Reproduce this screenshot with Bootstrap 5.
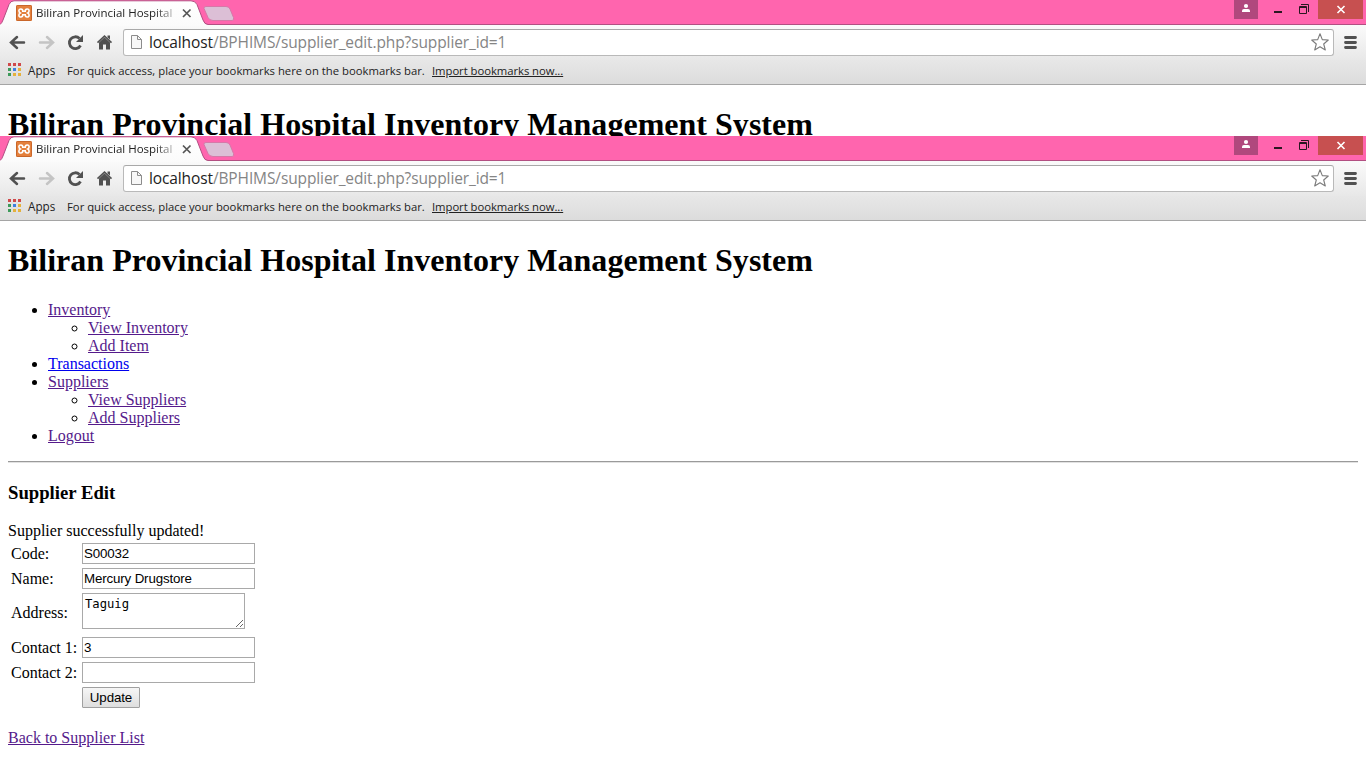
<!DOCTYPE html>
<html lang="en">
<head>
<meta charset="utf-8">
<meta name="viewport" content="width=device-width, initial-scale=1">
<title>Biliran Provincial Hospital Inventory Management System</title>
<link href="https://cdn.jsdelivr.net/npm/bootstrap@5.3.0/dist/css/bootstrap.min.css" rel="stylesheet">
<style>
body{font-family:"Liberation Serif",serif;font-size:16px;line-height:18px;color:#000;background:#fff;overflow:hidden}
.window{width:1366px;overflow:hidden}
.window-back{height:136px}
.window-front{height:634px}
.chrome-ui{font-family:"Open Sans","Noto Sans",sans-serif;font-size:12px;line-height:16px;color:#222}
.titlebar{height:24px;background:#ff65ae}
.tab-shape{left:0;top:0;z-index:1}
.tab-label{left:36px;top:5px;z-index:2;width:140px;font-size:11.5px;white-space:nowrap;overflow:hidden;-webkit-mask-image:linear-gradient(90deg,#000 118px,transparent 146px);mask-image:linear-gradient(90deg,#000 118px,transparent 146px)}
.toolbar{height:36px;background:linear-gradient(#fbfbfb,#e8e8e8);box-shadow:inset 0 1px #b24f82}
.bookmarks{height:25px;background:linear-gradient(#e7e7e7,#dcdcdc);border-bottom:1px solid #a5a5a5;padding:0 0 2px 8px}
.omnibox{margin-left:10px;width:1211px;height:27px;background:#fff;border:1px solid #b9b9b9;border-top-color:#a9a9a9;border-radius:3px;padding:0 3px 0 6px}
.address{margin-left:6px;font-size:15.5px;letter-spacing:-.115px;line-height:24px;color:#858585;white-space:pre}
.address b{font-weight:400;color:#222}
.bm-text{white-space:nowrap;font-size:11.3px}
.apps-label{margin-left:7px;width:39px;font-size:11.7px;margin-top:-2px}
.hint{width:365px}
.import{letter-spacing:-.05px}
.window svg{display:block;flex:none}
.viewport{padding:21px 8px 0}
.viewport h1{font-size:32px;line-height:37px;font-weight:700;letter-spacing:.02px;margin:0 0 22px}
.viewport h3{font-size:18.72px;line-height:21px;font-weight:700;margin:0 0 19px}
.viewport ul{padding-left:40px;margin:0}
.viewport a{color:#551a8b;text-decoration:underline}
.viewport a.fresh{color:#0000ee}
.rule{height:2px;border-top:1px solid #9a9a9a;border-bottom:1px solid #e2e2e2;margin:16px 0 19px}
.fields{border-collapse:separate;border-spacing:2px}
.fields td{padding:1px;vertical-align:middle}
.fields td:first-child{width:69px;white-space:nowrap}
.box{display:block;border:1px solid #a9a9a9;border-radius:0;background:#fff;color:#000;width:173px;height:21px;padding:1px;font:13.33px/17px "Liberation Sans",sans-serif;letter-spacing:-.15px}
textarea.box{width:163px;height:36px;padding:3px 2px 1px;margin-bottom:4px;font:12.2px/15px "DejaVu Sans Mono",monospace;letter-spacing:0;resize:both;overflow:auto}
.update{display:block;width:58px;height:21px;border:1px solid #a0a0a0;border-radius:1px;background:linear-gradient(#f6f6f6,#dedede);color:#000;padding:0;font:13.33px/19px "Liberation Sans",sans-serif;letter-spacing:-.1px}
.back-link{margin-top:18px}
</style>
</head>
<body>
<svg width="0" height="0" class="position-absolute">
  <defs>
    <linearGradient id="tabFill" x1="0" y1="0" x2="0" y2="1"><stop offset="0" stop-color="#fff"/><stop offset="1" stop-color="#fbfbfb"/></linearGradient>
    <symbol id="tabs" viewBox="0 0 240 26">
      <path d="M0 24.500Q2 23 3 20L9 4.500Q10.500 .8 14 .8H191Q195 .8 197 4.500L203 20Q204.500 24.500 208 24.500V26H0z" fill="url(#tabFill)"/>
      <path d="M0 24.500Q2 23 3 20L9 4.500Q10.500 .8 14 .8H191Q195 .8 197 4.500L203 20Q204.500 24.500 208 24.500H240" fill="none" stroke="#b24f82"/>
      <path d="M206 6.500H226Q229 6.500 230 9L233.500 17.500Q234.500 20.500 232 20.500H213Q209.500 20.500 208 17.500L204 8.500Q203.500 6.500 206 6.500z" fill="#dcbfd6" stroke="#d678a8"/>
      <rect x="16" y="5" width="16" height="16" rx="1.500" fill="#e4803c"/>
      <rect x="16.500" y="5.500" width="15" height="15" rx="1" fill="none" stroke="#c9662a"/>
      <path d="M24 11.200H22.800C22.800 8.300 18.900 8.300 18.900 10.800Q18.900 12.300 20.200 13Q18.900 13.700 18.900 15.200C18.900 17.700 22.800 17.700 22.800 14.800H25.200C25.200 17.700 29.100 17.700 29.100 15.200Q29.100 13.700 27.800 13Q29.100 12.300 29.100 10.800C29.100 8.300 25.200 8.300 25.200 11.200z" fill="none" stroke="#fff" stroke-width="1.600"/>
      <path d="M183 9.500L190.500 17M190.500 9.500L183 17" stroke="#555" stroke-width="1.700"/>
    </symbol>
    <symbol id="controls" viewBox="0 0 130 24">
      <rect width="24" height="19" fill="#b0487d"/>
      <circle cx="12" cy="6" r="2.100" fill="#fff"/><path d="M8 12V10.800Q8 9 10 9H14Q16 9 16 10.800V12z" fill="#fff"/>
      <path d="M40 11h8v2h-8z" fill="#2a1721"/>
      <path d="M65.500 6.500h7v7h-7zM65 7.500h8M67 4.500h7.500V12" fill="none" stroke="#2a1721"/>
      <rect x="84" width="45" height="19" fill="#c75050"/>
      <path d="M103.500 6L110.500 13M110.500 6L103.500 13" stroke="#fff" stroke-width="1.600"/>
    </symbol>
    <symbol id="navicons" viewBox="0 0 113 36">
      <path d="M17 13L11 18.500L17 24M11.500 18.500H24" fill="none" stroke="#515151" stroke-width="2.500" stroke-linecap="round"/>
      <path d="M47 13L53 18.500L47 24M52.500 18.500H40" fill="none" stroke="#c4c4c4" stroke-width="2.500" stroke-linecap="round"/>
      <path d="M80.500 21.500A5.900 5.900 0 1 1 79.500 14.500" fill="none" stroke="#515151" stroke-width="2.800"/>
      <path d="M83 11V18H76z" fill="#515151"/>
      <path d="M97.500 18.700L104.500 12L111.500 18.700" fill="none" stroke="#515151" stroke-width="1.600"/>
      <path d="M99 18.500L104.500 13.300L110 18.500V25.500H106V20.500H103V25.500H99zM107.500 11.500h2.500v4l-2.500-2z" fill="#515151"/>
    </symbol>
    <symbol id="page" viewBox="0 0 13 16">
      <path d="M1.500 1.500H7.500L11.500 5.500V14.500H1.500z" fill="#f7f7f7" stroke="#8c8c8c"/><path d="M7.500 1.500V5.500H11.500" fill="none" stroke="#8c8c8c"/>
    </symbol>
    <symbol id="star" viewBox="0 0 20 20">
      <path d="M10 1.800L12.300 7.600L18.300 8L13.700 12L15.300 18L10 14.700L4.700 18L6.300 12L1.700 8L7.700 7.600z" fill="#fff" stroke="#7b7b7b" stroke-width="1.100" stroke-linejoin="round"/>
    </symbol>
    <symbol id="menu" viewBox="0 0 13 13"><path d="M1.500 1.500H11.500M1.500 6.500H11.500M1.500 11.500H11.500" stroke="#515151" stroke-width="2.800" stroke-linecap="round"/></symbol>
    <symbol id="apps" viewBox="0 0 13 13">
      <path d="M0 0h3v3H0zM5 0h3v3H5zM10 0h3v3h-3z" fill="#d0494a"/>
      <path d="M0 5h3v3H0zM0 10h3v3H0z" fill="#3d9a5a"/><path d="M5 5h3v3H5z" fill="#3f7fe0"/>
      <path d="M5 10h3v3H5zM10 5h3v3h-3zM10 10h3v3h-3z" fill="#e5b13c"/>
    </symbol>
  </defs>
</svg>

<section class="window window-back">
  <header class="chrome-ui">
    <div class="titlebar position-relative d-flex justify-content-end">
      <svg class="tab-shape position-absolute" width="240" height="26"><use href="#tabs"/></svg>
      <span class="tab-label position-absolute">Biliran Provincial Hospital I</span>
      <svg width="132" height="24" viewBox="0 0 132 24"><use href="#controls" width="130" height="24"/></svg>
    </div>
    <div class="toolbar d-flex align-items-center">
      <svg width="113" height="36"><use href="#navicons"/></svg>
      <div class="omnibox d-flex align-items-center">
        <svg width="13" height="16"><use href="#page"/></svg>
        <span class="address"><b>localhost</b>/BPHIMS/supplier_edit.php?supplier_id=1</span>
        <svg class="ms-auto" width="20" height="20"><use href="#star"/></svg>
      </div>
      <svg class="ms-auto me-2" width="14" height="13" viewBox="0 0 14 13"><use href="#menu" width="13" height="13"/></svg>
    </div>
    <div class="bookmarks d-flex align-items-center">
      <svg class="mb-1" width="13" height="13"><use href="#apps"/></svg>
      <span class="bm-text apps-label">Apps</span>
      <span class="bm-text hint">For quick access, place your bookmarks here on the bookmarks bar.</span>
      <u class="bm-text import">Import bookmarks now...</u>
    </div>
  </header>
  <main class="viewport"><h1>Biliran Provincial Hospital Inventory Management System</h1></main>
</section>

<section class="window window-front">
  <header class="chrome-ui">
    <div class="titlebar position-relative d-flex justify-content-end">
      <svg class="tab-shape position-absolute" width="240" height="26"><use href="#tabs"/></svg>
      <span class="tab-label position-absolute">Biliran Provincial Hospital I</span>
      <svg width="132" height="24" viewBox="0 0 132 24"><use href="#controls" width="130" height="24"/></svg>
    </div>
    <div class="toolbar d-flex align-items-center">
      <svg width="113" height="36"><use href="#navicons"/></svg>
      <div class="omnibox d-flex align-items-center">
        <svg width="13" height="16"><use href="#page"/></svg>
        <span class="address"><b>localhost</b>/BPHIMS/supplier_edit.php?supplier_id=1</span>
        <svg class="ms-auto" width="20" height="20"><use href="#star"/></svg>
      </div>
      <svg class="ms-auto me-2" width="14" height="13" viewBox="0 0 14 13"><use href="#menu" width="13" height="13"/></svg>
    </div>
    <div class="bookmarks d-flex align-items-center">
      <svg class="mb-1" width="13" height="13"><use href="#apps"/></svg>
      <span class="bm-text apps-label">Apps</span>
      <span class="bm-text hint">For quick access, place your bookmarks here on the bookmarks bar.</span>
      <u class="bm-text import">Import bookmarks now...</u>
    </div>
  </header>
  <main class="viewport">
    <h1>Biliran Provincial Hospital Inventory Management System</h1>
    <ul>
      <li><a href="#">Inventory</a>
        <ul><li><a href="#">View Inventory</a></li><li><a href="#">Add Item</a></li></ul>
      </li>
      <li><a href="#" class="fresh">Transactions</a></li>
      <li><a href="#">Suppliers</a>
        <ul><li><a href="#">View Suppliers</a></li><li><a href="#">Add Suppliers</a></li></ul>
      </li>
      <li><a href="#">Logout</a></li>
    </ul>
    <div class="rule"></div>
    <h3>Supplier Edit</h3>
    <div>Supplier successfully updated!</div>
    <form>
      <table class="fields">
        <tr><td>Code:</td><td><input class="box" value="S00032"></td></tr>
        <tr><td>Name:</td><td><input class="box" value="Mercury Drugstore"></td></tr>
        <tr><td>Address:</td><td><textarea class="box" spellcheck="false">Taguig</textarea></td></tr>
        <tr><td>Contact 1:</td><td><input class="box" value="3"></td></tr>
        <tr><td>Contact 2:</td><td><input class="box"></td></tr>
        <tr><td></td><td><button type="button" class="update">Update</button></td></tr>
      </table>
    </form>
    <div class="back-link"><a href="#">Back to Supplier List</a></div>
  </main>
</section>
<script src="https://cdn.jsdelivr.net/npm/bootstrap@5.3.0/dist/js/bootstrap.bundle.min.js"></script>
</body>
</html>
